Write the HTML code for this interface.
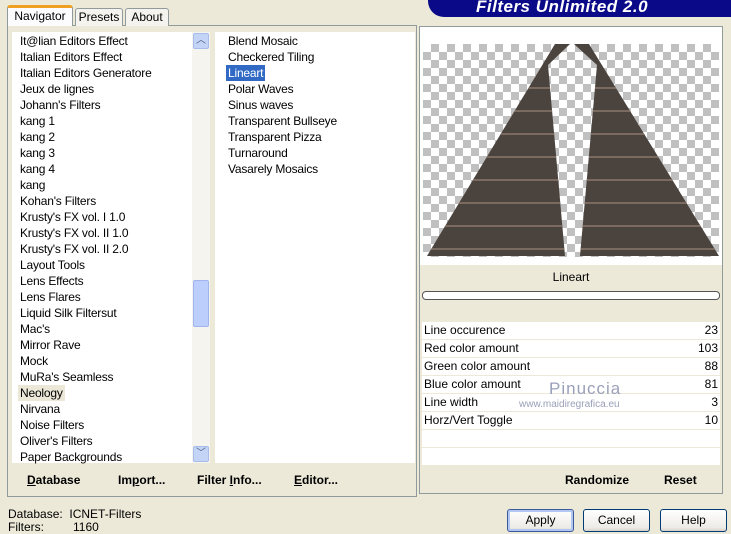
<!DOCTYPE html>
<html><head><style>
*{margin:0;padding:0;box-sizing:border-box}
body{width:731px;height:533px;background:#ece9d8;font-family:"Liberation Sans",sans-serif;font-size:12px;color:#000;position:relative;overflow:hidden}
.a{position:absolute;white-space:nowrap}
.tab{position:absolute;top:8px;height:18px;border:1px solid #919b9c;border-bottom:none;background:#f4f3ee;border-radius:3px 3px 0 0;text-align:center;line-height:17px}
.li{position:absolute;left:20px;height:16px;line-height:16px;letter-spacing:-0.2px}
.l2{position:absolute;left:228px;line-height:16px;height:16px;letter-spacing:-0.2px}
.row{position:absolute;left:422px;width:298px;height:17px;background:#fff;line-height:17px}
.row span{position:absolute;left:2px}.row b{position:absolute;right:2px;font-weight:normal}
.btn{position:absolute;top:509px;height:23px;border:1px solid #003c74;border-radius:3px;background:linear-gradient(#fff,#ecebe6 85%,#d6d0c5);text-align:center;line-height:21px}
.bb{position:absolute;font-weight:bold;top:473px}
</style></head><body>
<div class="a" style="left:428px;top:0;width:303px;height:17px;background:#0a0a88;border-radius:0 0 0 16px"></div>
<div class="a" style="left:476px;top:-3px;color:#fff;font-weight:bold;font-style:italic;font-size:17px;letter-spacing:0.5px">Filters Unlimited 2.0</div>
<div class="a" style="left:7px;top:25px;width:410px;height:472px;border:1px solid #919b9c;background:#ece9d8"></div>
<div class="tab" style="left:75px;width:48px">Presets</div>
<div class="tab" style="left:125px;width:44px">About</div>
<div class="tab" style="left:7px;top:5px;height:21px;width:66px;background:#fcfcfe;border-top:3px solid #f0a020;line-height:16px;z-index:2">Navigator</div>
<div class="a" style="left:12px;top:32px;width:198px;height:431px;background:#fff"></div>
<div class="a" style="left:192px;top:32px;width:18px;height:431px;background:#f5f4ee"></div>
<div class="a" style="left:193px;top:33px;width:16px;height:16px;background:#c4d4f7;border:1px solid #a8bbea;border-radius:2px;color:#4d6185;font-size:10px;text-align:center;line-height:14px">︿</div>
<div class="a" style="left:193px;top:280px;width:16px;height:47px;background:#bccefb;border:1px solid #9fb3ee;border-radius:2px"></div>
<div class="a" style="left:193px;top:446px;width:16px;height:16px;background:#c4d4f7;border:1px solid #a8bbea;border-radius:2px;color:#4d6185;font-size:10px;text-align:center;line-height:14px">﹀</div>
<div class="a" style="left:215px;top:32px;width:200px;height:431px;background:#fff"></div>
<div class="li" style="top:33px">It@lian Editors Effect</div>
<div class="li" style="top:49px">Italian Editors Effect</div>
<div class="li" style="top:65px">Italian Editors Generatore</div>
<div class="li" style="top:81px">Jeux de lignes</div>
<div class="li" style="top:97px">Johann's Filters</div>
<div class="li" style="top:113px">kang 1</div>
<div class="li" style="top:129px">kang 2</div>
<div class="li" style="top:145px">kang 3</div>
<div class="li" style="top:161px">kang 4</div>
<div class="li" style="top:177px">kang</div>
<div class="li" style="top:193px">Kohan's Filters</div>
<div class="li" style="top:209px">Krusty's FX vol. I 1.0</div>
<div class="li" style="top:225px">Krusty's FX vol. II 1.0</div>
<div class="li" style="top:241px">Krusty's FX vol. II 2.0</div>
<div class="li" style="top:257px">Layout Tools</div>
<div class="li" style="top:273px">Lens Effects</div>
<div class="li" style="top:289px">Lens Flares</div>
<div class="li" style="top:305px">Liquid Silk Filtersut</div>
<div class="li" style="top:321px">Mac's</div>
<div class="li" style="top:337px">Mirror Rave</div>
<div class="li" style="top:353px">Mock</div>
<div class="li" style="top:369px">MuRa's Seamless</div>
<div class="li" style="top:385px;left:18px;padding:0 2px;background:#ebe8d8">Neology</div>
<div class="li" style="top:401px">Nirvana</div>
<div class="li" style="top:417px">Noise Filters</div>
<div class="li" style="top:433px">Oliver's Filters</div>
<div class="li" style="top:449px">Paper Backgrounds</div>
<div class="l2" style="top:33px">Blend Mosaic</div>
<div class="l2" style="top:49px">Checkered Tiling</div>
<div class="l2" style="top:65px;left:226px;padding:0 2px;background:#316ac5;color:#fff">Lineart</div>
<div class="l2" style="top:81px">Polar Waves</div>
<div class="l2" style="top:97px">Sinus waves</div>
<div class="l2" style="top:113px">Transparent Bullseye</div>
<div class="l2" style="top:129px">Transparent Pizza</div>
<div class="l2" style="top:145px">Turnaround</div>
<div class="l2" style="top:161px">Vasarely Mosaics</div>
<div class="bb" style="left:27px"><u>D</u>atabase</div>
<div class="bb" style="left:118px">Im<u>p</u>ort...</div>
<div class="bb" style="left:197px">Filter <u>I</u>nfo...</div>
<div class="bb" style="left:294px"><u>E</u>ditor...</div>
<div class="a" style="left:8px;top:508px;line-height:13px">Database:&nbsp; ICNET-Filters<br>Filters:<span style="margin-left:29px">1160</span></div>
<div class="a" style="left:419px;top:26px;width:304px;height:468px;border:1px solid #919b9c;background:#ece9d8"></div>
<div class="a" style="left:420px;top:27px;width:302px;height:238px;background:#fff"></div>
<div class="a" style="left:423px;top:44px;width:296px;height:213px;background:repeating-conic-gradient(#c0c0c0 0 25%,#fff 0 50%) 0 0/16px 16px"></div>
<svg class="a" style="left:0;top:0" width="731" height="533">
<defs><clipPath id="c">
<polygon points="555,44 570,44 548,65 565,256 427,256"/>
<polygon points="574,44 589,44 719,256 580,256 597,65"/>
</clipPath></defs>
<g fill="#4a433e">
<polygon points="555,44 570,44 548,65 565,256 427,256"/>
<polygon points="574,44 589,44 719,256 580,256 597,65"/>
</g>
<g stroke="#7a6a60" stroke-width="2" clip-path="url(#c)">
<line x1="420" y1="249" x2="720" y2="249"/><line x1="420" y1="226" x2="720" y2="226"/><line x1="420" y1="203" x2="720" y2="203"/><line x1="420" y1="180" x2="720" y2="180"/><line x1="420" y1="157" x2="720" y2="157"/><line x1="420" y1="134" x2="720" y2="134"/><line x1="420" y1="111" x2="720" y2="111"/><line x1="420" y1="88" x2="720" y2="88"/>
</g>
</svg>
<div class="a" style="left:420px;top:266px;width:302px;height:22px;text-align:center;line-height:22px">Lineart</div>
<div class="a" style="left:422px;top:291px;width:298px;height:9px;border:1px solid #555;border-radius:4px;background:#fff"></div>
<div class="row" style="top:322px"><span>Line occurence</span><b>23</b></div>
<div class="row" style="top:340px"><span>Red color amount</span><b>103</b></div>
<div class="row" style="top:358px"><span>Green color amount</span><b>88</b></div>
<div class="row" style="top:376px"><span>Blue color amount</span><b>81</b></div>
<div class="row" style="top:394px"><span>Line width</span><b>3</b></div>
<div class="row" style="top:412px"><span>Horz/Vert Toggle</span><b>10</b></div>
<div class="row" style="top:430px"></div>
<div class="row" style="top:448px"></div>
<div class="a" style="left:549px;top:379px;color:#9aa0b8;font-size:17px;letter-spacing:1px">Pinuccia</div>
<div class="a" style="left:519px;top:399px;color:#9aa0b8;font-size:10px">www.maidiregrafica.eu</div>
<div class="bb" style="left:565px">Randomize</div>
<div class="bb" style="left:664px">Reset</div>
<div class="btn" style="left:507px;width:67px;border-color:#3c5a9a;box-shadow:inset 0 0 0 2px #b2c8f2">Apply</div>
<div class="btn" style="left:583px;width:67px">Cancel</div>
<div class="btn" style="left:660px;width:67px">Help</div>
</body></html>
